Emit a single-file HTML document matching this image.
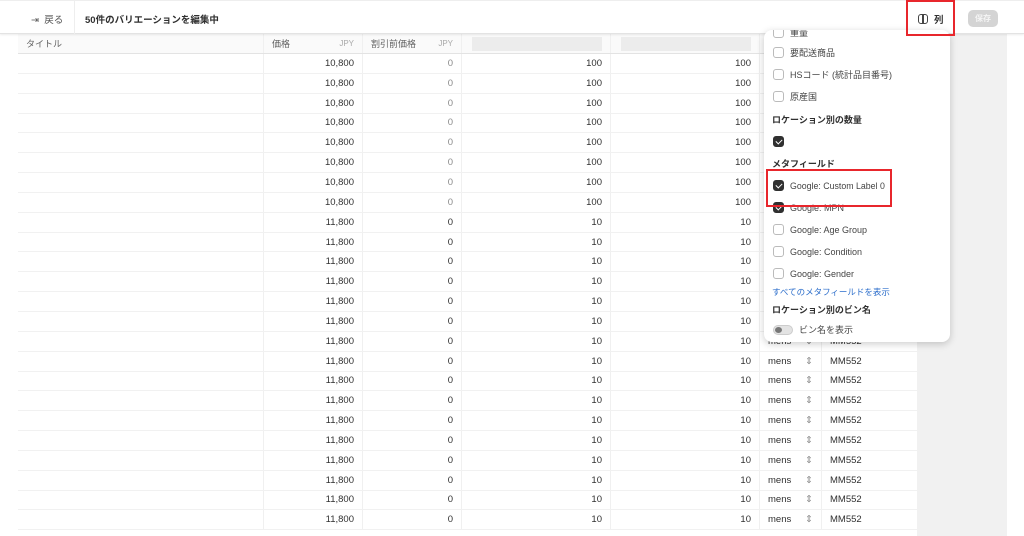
<!DOCTYPE html>
<html><head><meta charset="utf-8"><style>
*{margin:0;padding:0;box-sizing:border-box}
body{width:1024px;height:536px;overflow:hidden;background:#fff;font-family:"Liberation Sans","Noto Sans CJK JP",sans-serif;color:#303030;position:relative;font-size:9.5px}
.top{position:absolute;left:0;top:0;width:1024px;height:34px;border-top:1px solid #eee;border-bottom:1px solid #e3e3e3;background:#fff;box-shadow:0 1px 2px rgba(0,0,0,.08);z-index:2}
.grey{position:absolute;left:917px;top:34px;width:90px;height:502px;background:#f1f1f1}
.tbl{position:absolute;left:18px;top:34px;width:899px}
.r{display:flex;height:19.85px;border-bottom:1px solid #f1f1f1;align-items:center}
.r>div{height:100%;display:flex;align-items:center;border-right:1px solid #f0f0f0;padding:0 8px}
.h{height:20px;background:#fafafa;border-bottom:1px solid #e3e3e3;color:#616161;font-size:9px}
.c1{width:246px}.c2{width:99px;justify-content:flex-end}.c3{width:99px;justify-content:flex-end}.c4{width:149px;justify-content:flex-end}.c5{width:149px;justify-content:flex-end}.c6{width:62px;justify-content:space-between}.c7{width:95px;border-right:none!important}
.g{color:#8a8a8a}
.menu{position:absolute;left:764px;top:30px;width:186px;height:312px;background:#fff;border-radius:8px;box-shadow:0 2px 8px rgba(0,0,0,.2);z-index:3;overflow:hidden}
.it{position:absolute;left:9px;display:flex;align-items:center;font-size:9px;color:#444}
.cb{width:11px;height:11px;border:1px solid #bbb;border-radius:3px;margin-right:6px;background:#fff}
.cb.on{background:#303030;border-color:#303030;position:relative}
.cb.on:after{content:"";position:absolute;left:3px;top:1px;width:3px;height:5px;border:solid #fff;border-width:0 1.3px 1.3px 0;transform:rotate(45deg)}
.sec{position:absolute;left:8px;font-weight:bold;font-size:9px;color:#303030}
.red{position:absolute;border:2px solid #e8262c;z-index:5}
</style></head><body>
<div class="top">
<div style="position:absolute;left:31px;top:11px;font-size:9.5px;color:#555">⇥&nbsp;&nbsp;戻る</div>
<div style="position:absolute;left:74px;top:0;width:1px;height:33px;background:#eee"></div>
<div style="position:absolute;left:85px;top:11px;font-size:9.5px;font-weight:bold;color:#303030">50件のバリエーションを編集中</div>
<div style="position:absolute;left:918px;top:11px;font-size:9.5px;font-weight:bold;display:flex;align-items:center"><span style="display:inline-block;width:10px;height:10px;border:1.3px solid #444;border-radius:3px;margin-right:6px;position:relative"><span style="position:absolute;left:2.5px;top:0;width:2px;height:100%;border-left:1.2px solid #444;border-right:1.2px solid #444"></span></span>列</div>
<div style="position:absolute;left:968px;top:9px;width:30px;height:17px;background:#d4d4d4;border-radius:5px;color:#f5f5f5;font-size:8px;font-weight:bold;text-align:center;line-height:17px">保存</div>
</div>
<div class="red" style="left:906px;top:0;width:49px;height:36px"></div>
<div class="red" style="left:766px;top:169px;width:126px;height:38px"></div>
<div class="grey"></div>
<div class="tbl">
<div class="r h"><div class="c1">タイトル</div><div class="c2" style="justify-content:space-between">価格<span style="color:#aaa;font-size:8px">JPY</span></div><div class="c3" style="justify-content:space-between">割引前価格<span style="color:#aaa;font-size:8px">JPY</span></div><div class="c4"><span style="display:block;width:130px;height:14px;background:#ececec"></span></div><div class="c5"><span style="display:block;width:130px;height:14px;background:#ececec"></span></div><div class="c6"></div><div class="c7"></div></div>
<div class="r"><div class="c1"></div><div class="c2">10,800</div><div class="c3 g">0</div><div class="c4">100</div><div class="c5">100</div><div class="c6"></div><div class="c7"></div></div>
<div class="r"><div class="c1"></div><div class="c2">10,800</div><div class="c3 g">0</div><div class="c4">100</div><div class="c5">100</div><div class="c6"></div><div class="c7"></div></div>
<div class="r"><div class="c1"></div><div class="c2">10,800</div><div class="c3 g">0</div><div class="c4">100</div><div class="c5">100</div><div class="c6"></div><div class="c7"></div></div>
<div class="r"><div class="c1"></div><div class="c2">10,800</div><div class="c3 g">0</div><div class="c4">100</div><div class="c5">100</div><div class="c6"></div><div class="c7"></div></div>
<div class="r"><div class="c1"></div><div class="c2">10,800</div><div class="c3 g">0</div><div class="c4">100</div><div class="c5">100</div><div class="c6"></div><div class="c7"></div></div>
<div class="r"><div class="c1"></div><div class="c2">10,800</div><div class="c3 g">0</div><div class="c4">100</div><div class="c5">100</div><div class="c6"></div><div class="c7"></div></div>
<div class="r"><div class="c1"></div><div class="c2">10,800</div><div class="c3 g">0</div><div class="c4">100</div><div class="c5">100</div><div class="c6"></div><div class="c7"></div></div>
<div class="r"><div class="c1"></div><div class="c2">10,800</div><div class="c3 g">0</div><div class="c4">100</div><div class="c5">100</div><div class="c6"></div><div class="c7"></div></div>
<div class="r"><div class="c1"></div><div class="c2">11,800</div><div class="c3">0</div><div class="c4">10</div><div class="c5">10</div><div class="c6"></div><div class="c7"></div></div>
<div class="r"><div class="c1"></div><div class="c2">11,800</div><div class="c3">0</div><div class="c4">10</div><div class="c5">10</div><div class="c6"></div><div class="c7"></div></div>
<div class="r"><div class="c1"></div><div class="c2">11,800</div><div class="c3">0</div><div class="c4">10</div><div class="c5">10</div><div class="c6"></div><div class="c7"></div></div>
<div class="r"><div class="c1"></div><div class="c2">11,800</div><div class="c3">0</div><div class="c4">10</div><div class="c5">10</div><div class="c6"></div><div class="c7"></div></div>
<div class="r"><div class="c1"></div><div class="c2">11,800</div><div class="c3">0</div><div class="c4">10</div><div class="c5">10</div><div class="c6"></div><div class="c7"></div></div>
<div class="r"><div class="c1"></div><div class="c2">11,800</div><div class="c3">0</div><div class="c4">10</div><div class="c5">10</div><div class="c6"></div><div class="c7"></div></div>
<div class="r"><div class="c1"></div><div class="c2">11,800</div><div class="c3">0</div><div class="c4">10</div><div class="c5">10</div><div class="c6">mens<span class="g">⇕</span></div><div class="c7">MM552</div></div>
<div class="r"><div class="c1"></div><div class="c2">11,800</div><div class="c3">0</div><div class="c4">10</div><div class="c5">10</div><div class="c6">mens<span class="g">⇕</span></div><div class="c7">MM552</div></div>
<div class="r"><div class="c1"></div><div class="c2">11,800</div><div class="c3">0</div><div class="c4">10</div><div class="c5">10</div><div class="c6">mens<span class="g">⇕</span></div><div class="c7">MM552</div></div>
<div class="r"><div class="c1"></div><div class="c2">11,800</div><div class="c3">0</div><div class="c4">10</div><div class="c5">10</div><div class="c6">mens<span class="g">⇕</span></div><div class="c7">MM552</div></div>
<div class="r"><div class="c1"></div><div class="c2">11,800</div><div class="c3">0</div><div class="c4">10</div><div class="c5">10</div><div class="c6">mens<span class="g">⇕</span></div><div class="c7">MM552</div></div>
<div class="r"><div class="c1"></div><div class="c2">11,800</div><div class="c3">0</div><div class="c4">10</div><div class="c5">10</div><div class="c6">mens<span class="g">⇕</span></div><div class="c7">MM552</div></div>
<div class="r"><div class="c1"></div><div class="c2">11,800</div><div class="c3">0</div><div class="c4">10</div><div class="c5">10</div><div class="c6">mens<span class="g">⇕</span></div><div class="c7">MM552</div></div>
<div class="r"><div class="c1"></div><div class="c2">11,800</div><div class="c3">0</div><div class="c4">10</div><div class="c5">10</div><div class="c6">mens<span class="g">⇕</span></div><div class="c7">MM552</div></div>
<div class="r"><div class="c1"></div><div class="c2">11,800</div><div class="c3">0</div><div class="c4">10</div><div class="c5">10</div><div class="c6">mens<span class="g">⇕</span></div><div class="c7">MM552</div></div>
<div class="r"><div class="c1"></div><div class="c2">11,800</div><div class="c3">0</div><div class="c4">10</div><div class="c5">10</div><div class="c6">mens<span class="g">⇕</span></div><div class="c7">MM552</div></div>
</div>
<div class="menu">
<div class="it" style="top:-4px"><span class="cb"></span>重量</div>
<div class="it" style="top:16px"><span class="cb"></span>要配送商品</div>
<div class="it" style="top:38px"><span class="cb"></span>HSコード (統計品目番号)</div>
<div class="it" style="top:60px"><span class="cb"></span>原産国</div>
<div class="sec" style="top:83px">ロケーション別の数量</div>
<div class="it" style="top:106px"><span class="cb on"></span></div>
<div class="sec" style="top:127px">メタフィールド</div>
<div class="it" style="top:150px;font-size:8.8px"><span class="cb on"></span>Google: Custom Label 0</div>
<div class="it" style="top:172px"><span class="cb on"></span>Google: MPN</div>
<div class="it" style="top:194px"><span class="cb"></span>Google: Age Group</div>
<div class="it" style="top:216px"><span class="cb"></span>Google: Condition</div>
<div class="it" style="top:238px"><span class="cb"></span>Google: Gender</div>
<div style="position:absolute;left:8px;top:256px;font-size:8.5px;color:#2c6ecb">すべてのメタフィールドを表示</div>
<div class="sec" style="top:273px">ロケーション別のビン名</div>
<div class="it" style="top:293px"><span style="width:20px;height:10px;border-radius:5px;background:#e3e3e3;border:1px solid #ccc;margin-right:6px;position:relative"><span style="position:absolute;left:1px;top:1px;width:7px;height:6px;border-radius:50%;background:#777"></span></span>ビン名を表示</div>
</div>
</body></html>
